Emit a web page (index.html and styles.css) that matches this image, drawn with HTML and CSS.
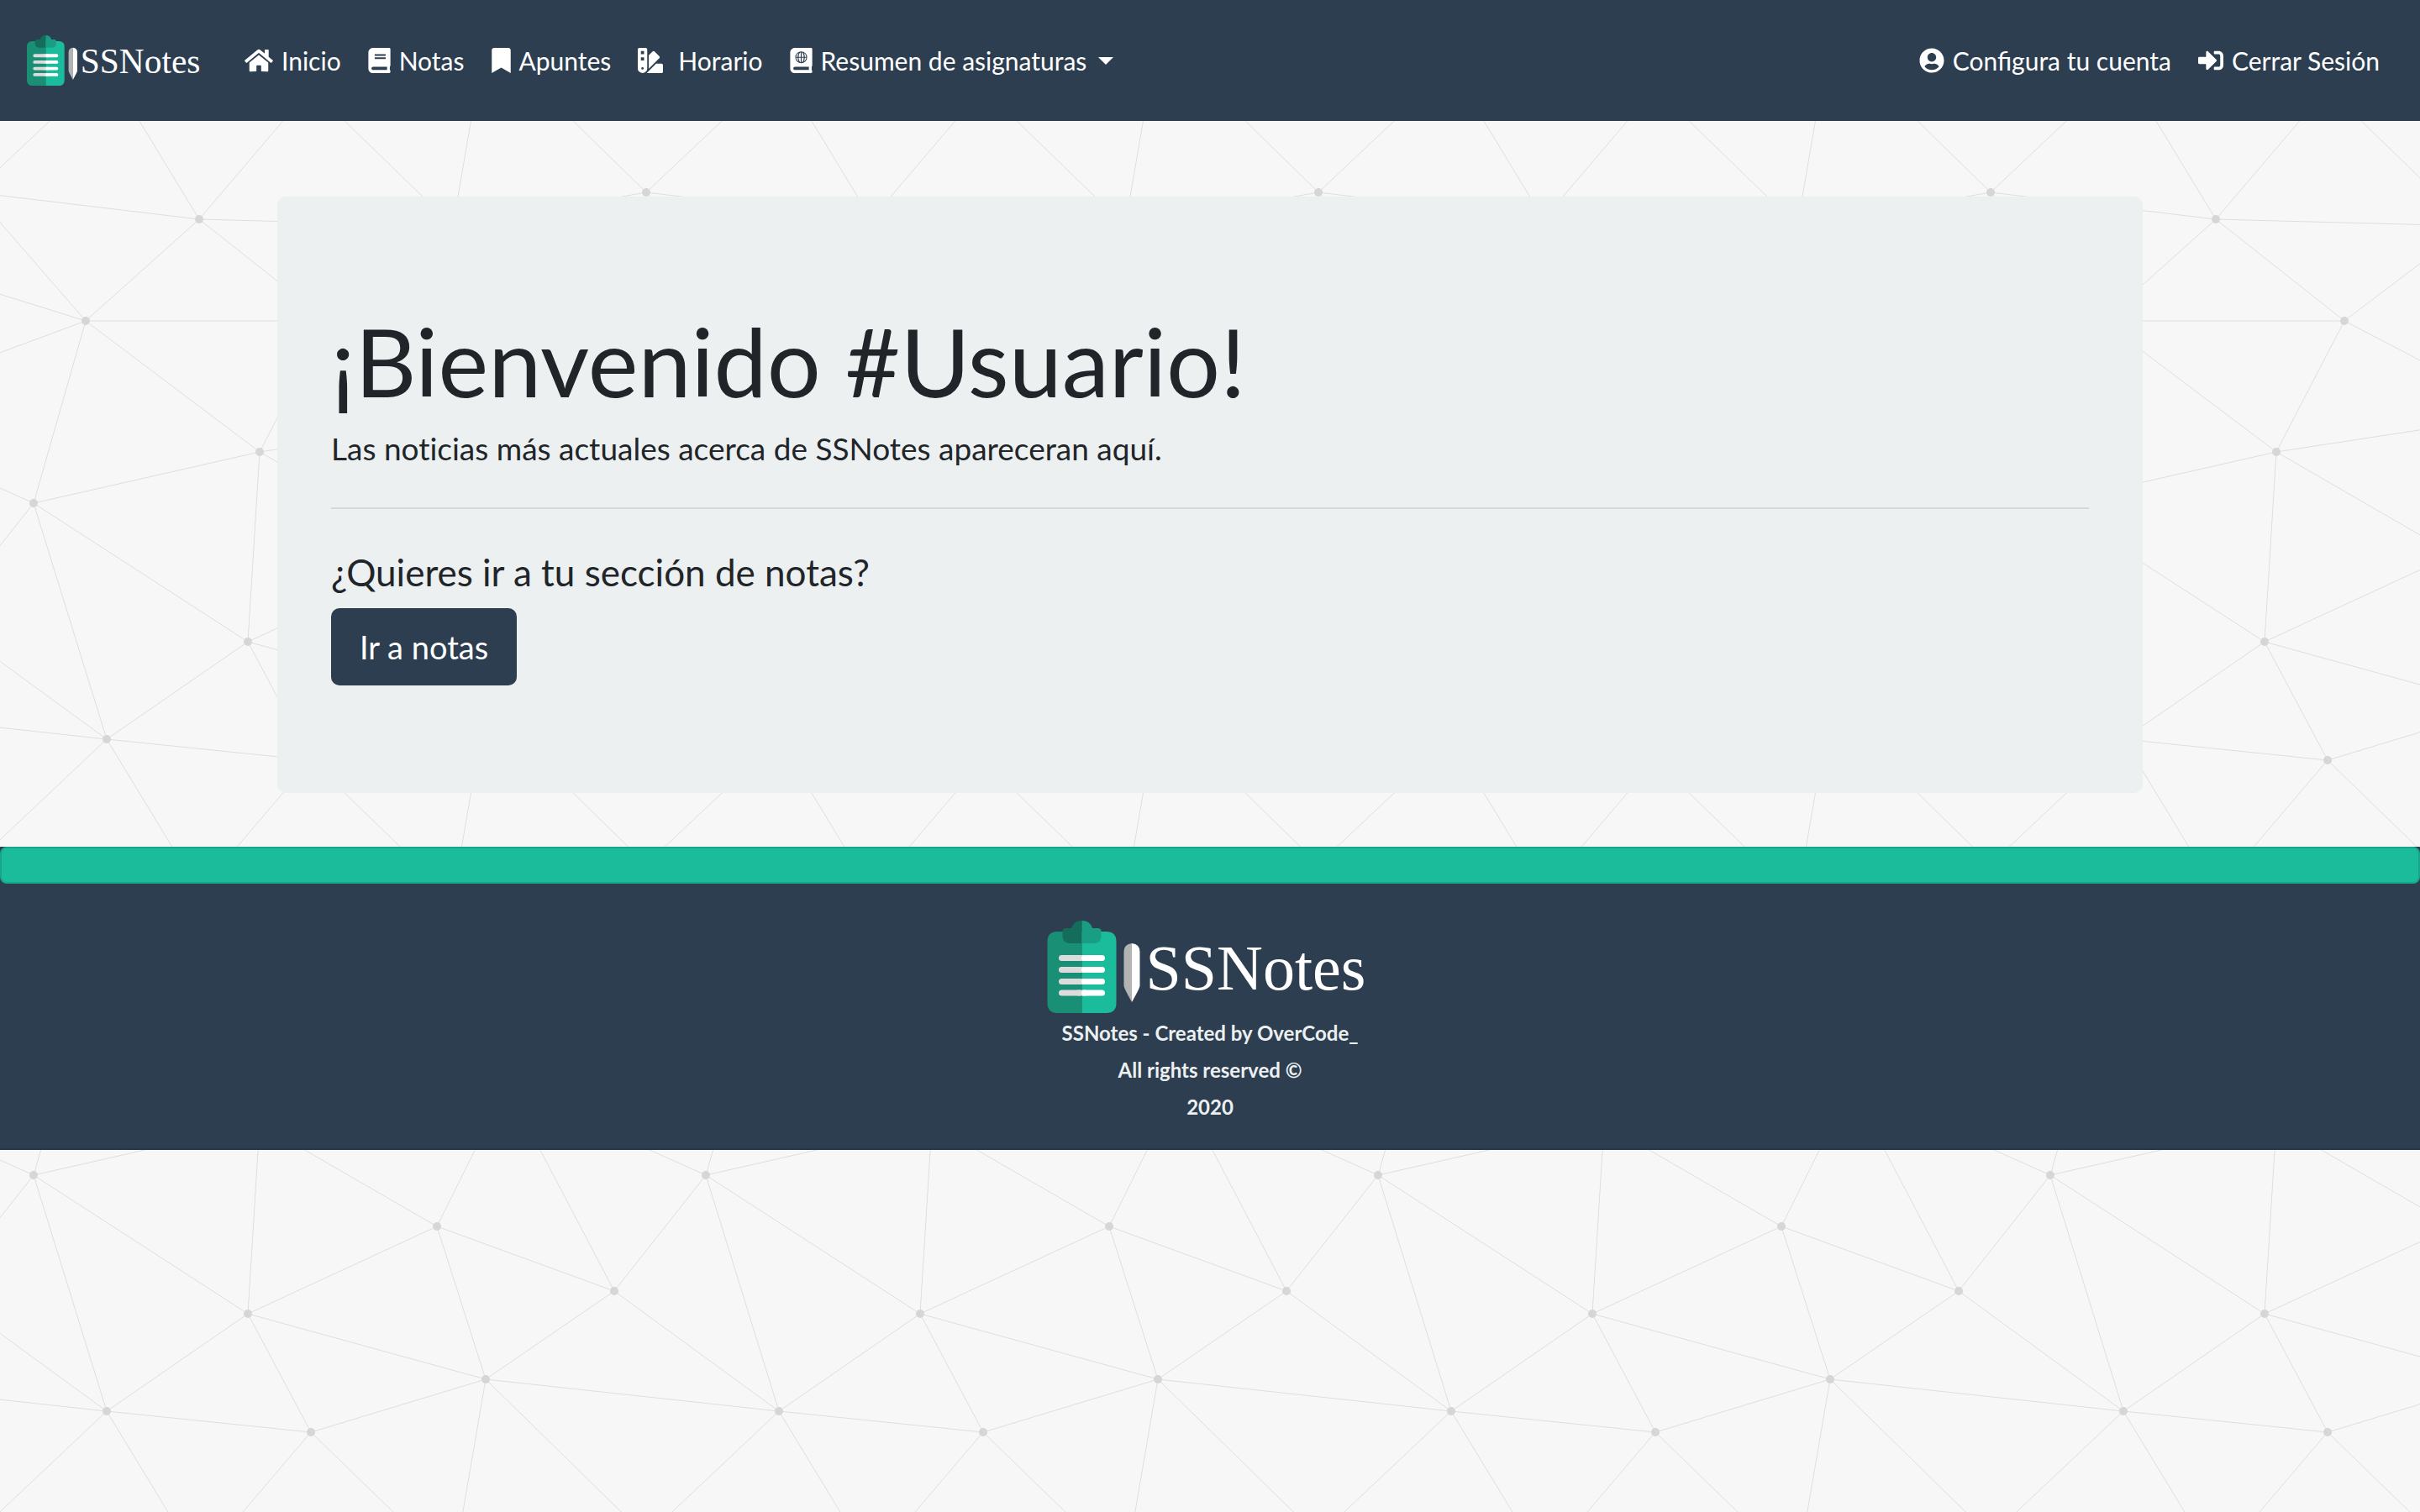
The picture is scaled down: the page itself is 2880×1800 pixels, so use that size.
FILE: index.html
```html
<!DOCTYPE html>
<html lang="es">
<head>
<meta charset="utf-8">
<title>SSNotes</title>
<meta name="viewport" content="width=device-width, initial-scale=1">
<link rel="stylesheet" href="styles.css">
</head>
<body>
<svg class="defs" aria-hidden="true">
  <symbol id="logo" viewBox="0 0 387 110">
    <path fill="#198f75" d="M41 13H12Q0 13 0 25V98Q0 110 12 110H41Z"/>
    <path fill="#1abc9c" d="M41 13H70Q82 13 82 25V98Q82 110 70 110H41Z"/>
    <path fill="#146c5b" d="M41 0Q31 0 28.500 9H22Q18 9 18 13V18Q18 27 27 27H41Z"/>
    <path fill="#1a9e83" d="M41 0Q51 0 53.500 9H60Q64 9 64 13V18Q64 27 55 27H41Z"/>
    <g stroke-width="7">
      <path stroke="#dcdcdc" stroke-linecap="round" d="M17 44.500H38M17 58.500H38M17 72.500H38M17 86H38"/>
      <path stroke="#fff" stroke-linecap="round" d="M44 44.500H65M44 58.500H65M44 72.500H65M44 86H65"/>
      <path stroke="#dcdcdc" d="M36 44.500H41M36 58.500H41M36 72.500H41M36 86H41"/>
      <path stroke="#fff" d="M41 44.500H46M41 58.500H46M41 72.500H46M41 86H46"/>
    </g>
    <path fill="#b3b3b3" d="M100.500 27Q91 28 91 37V78Q92 82 100.500 97Z"/>
    <path fill="#fff" d="M100.500 27Q110 28 110 37V78Q109 82 100.500 97Z"/>
    <text class="logo-word" x="117" y="82">SSNotes</text>
  </symbol>
</svg>

<nav class="navbar">
  <a class="brand" href="#" aria-label="SSNotes"><svg class="brand-logo"><use href="#logo"/></svg></a>
  <ul class="nav">
    <li><a class="nav-link" href="#">
      <svg class="icon icon-wide" viewBox="0 0 576 512"><path d="M280.370 148.260L96 300.110V464a16 16 0 0 0 16 16l112.060-.29a16 16 0 0 0 15.920-16V368a16 16 0 0 1 16-16h64a16 16 0 0 1 16 16v95.640a16 16 0 0 0 16 16.050L464 480a16 16 0 0 0 16-16V300L295.670 148.260a12.190 12.190 0 0 0-15.300 0zM571.600 251.470L488 182.560V44.050a12 12 0 0 0-12-12h-56a12 12 0 0 0-12 12v72.610L318.470 43a48 48 0 0 0-61 0L4.340 251.470a12 12 0 0 0-1.600 16.900l25.500 31A12 12 0 0 0 45.150 301l235.220-193.740a12.190 12.190 0 0 1 15.300 0L530.900 301a12 12 0 0 0 16.900-1.600l25.500-31a12 12 0 0 0-1.700-16.930z"/></svg>
      Inicio</a></li>
    <li><a class="nav-link" href="#">
      <svg class="icon icon-book" viewBox="0 0 448 512"><path d="M448 360V24c0-13.300-10.700-24-24-24H96C43 0 0 43 0 96v320c0 53 43 96 96 96h328c13.300 0 24-10.700 24-24v-16c0-7.500-3.500-14.300-8.900-18.700-4.200-15.400-4.200-59.300 0-74.700 5.400-4.300 8.900-11.100 8.900-18.600zM128 134c0-3.300 2.700-6 6-6h212c3.300 0 6 2.700 6 6v20c0 3.300-2.700 6-6 6H134c-3.300 0-6-2.700-6-6v-20zm0 64c0-3.300 2.700-6 6-6h212c3.300 0 6 2.700 6 6v20c0 3.300-2.700 6-6 6H134c-3.300 0-6-2.700-6-6v-20zm253.400 250H96c-17.700 0-32-14.300-32-32 0-17.600 14.400-32 32-32h285.400c-1.900 17.100-1.900 46.900 0 64z"/></svg>
      Notas</a></li>
    <li><a class="nav-link" href="#">
      <svg class="icon icon-mark" viewBox="0 0 384 512"><path d="M0 512V48C0 21.490 21.490 0 48 0h288c26.510 0 48 21.490 48 48v464L192 400 0 512z"/></svg>
      Apuntes</a></li>
    <li><a class="nav-link nav-link-spaced" href="#">
      <svg class="icon" viewBox="0 0 512 512"><path fill-rule="evenodd" d="M160 0H32A32 32 0 0 0 0 32v384a96 96 0 0 0 192 0V32a32 32 0 0 0-32-32zM96 440a24 24 0 1 1 24-24 24 24 0 0 1-24 24zm32-184H64v-64h64zm0-128H64V64h64zm352 192H372.500l-186.600 186.500c-2 2-4.300 3.500-6.400 5.500H480a32 32 0 0 0 32-32V352a32 32 0 0 0-32-32zM434 167.600l-90.500-90.500a32 32 0 0 0-45.300 0L224 151.300v271.200l210-209.700a32 32 0 0 0 0-45.200z"/></svg>
      Horario</a></li>
    <li><button class="nav-link dropdown" type="button" aria-haspopup="true">
      <svg class="icon icon-book" viewBox="0 0 448 512"><path fill-rule="evenodd" d="M448 360V24c0-13.300-10.700-24-24-24H96C43 0 0 43 0 96v320c0 53 43 96 96 96h328c13.300 0 24-10.700 24-24v-16c0-7.500-3.500-14.300-8.900-18.700-4.200-15.400-4.200-59.300 0-74.700 5.400-4.300 8.900-11.100 8.900-18.600zM224 72a120 120 0 1 1 0 240 120 120 0 1 1 0-240zm157.400 376H96c-17.700 0-32-14.300-32-32s14.300-32 32-32h285.400c-1.900 17.100-1.900 46.900 0 64z"/><path d="M214 90v92h-42c1-48 18-84 42-92zm20 0c24 8 41 44 42 92h-42zm-60 13c-14 19-22 47-23 79h-29c3-35 22-65 52-79zm100 0c30 14 49 44 52 79h-29c-1-32-9-60-23-79zM122 202h29c1 32 9 60 23 79-30-14-49-44-52-79zm50 0h42v92c-24-8-41-44-42-92zm62 0h42c-1 48-18 84-42 92zm63 0h29c-3 35-22 65-52 79 14-19 22-47 23-79z"/></svg>
      Resumen de asignaturas<span class="caret"></span></button></li>
  </ul>
  <ul class="nav nav-end">
    <li><a class="nav-link" href="#">
      <svg class="icon" viewBox="0 0 496 512"><path d="M248 8C111 8 0 119 0 256s111 248 248 248 248-111 248-248S385 8 248 8zm0 96c48.600 0 88 39.400 88 88s-39.400 88-88 88-88-39.400-88-88 39.400-88 88-88zm0 344c-58.700 0-111.300-26.600-146.500-68.200 18.800-35.400 55.600-59.800 98.500-59.800 2.400 0 4.800.4 7.100 1.100 13 4.200 26.600 6.900 40.900 6.900 14.300 0 28-2.700 40.900-6.900 2.300-.7 4.700-1.100 7.100-1.100 42.900 0 79.700 24.400 98.500 59.800C359.300 421.400 306.700 448 248 448z"/></svg>
      Configura tu cuenta</a></li>
    <li><a class="nav-link" href="#">
      <svg class="icon" viewBox="0 0 512 512"><path d="M416 448h-84c-6.600 0-12-5.400-12-12v-40c0-6.600 5.400-12 12-12h84c17.700 0 32-14.300 32-32V160c0-17.700-14.300-32-32-32h-84c-6.600 0-12-5.400-12-12V76c0-6.600 5.400-12 12-12h84c53 0 96 43 96 96v192c0 53-43 96-96 96zm-47-209L201 71c-15-15-41-4.500-41 17v96H24c-13.300 0-24 10.700-24 24v96c0 13.300 10.700 24 24 24h136v96c0 21.500 26 32 41 17l168-168c9.300-9.400 9.300-24.600 0-34z"/></svg>
      Cerrar Sesión</a></li>
  </ul>
</nav>

<main class="container">
  <section class="jumbotron">
    <h1>¡Bienvenido #Usuario!</h1>
    <p class="lead">Las noticias más actuales acerca de SSNotes apareceran aquí.</p>
    <hr>
    <h2>¿Quieres ir a tu sección de notas?</h2>
    <a class="btn" href="#">Ir a notas</a>
  </section>
</main>

<footer class="footer">
  <div class="footer-bar"></div>
  <div class="footer-body">
    <svg class="footer-logo" role="img" aria-label="SSNotes"><use href="#logo"/></svg>
    <p>SSNotes - Created by OverCode_</p>
    <p>All rights reserved ©</p>
    <p>2020</p>
  </div>
</footer>
</body>
</html>
```

FILE: styles.css
```css
*,
*::before,
*::after {
  box-sizing: border-box;
}

body {
  margin: 0;
  font: 400 30px/45px Lato, "Liberation Sans", sans-serif;
  color: #212529;
  background-color: #f7f7f7;
  background-image: url("data:image/svg+xml,%3Csvg xmlns='http://www.w3.org/2000/svg' width='800' height='800'%3E%3Cdefs%3E%3Cg id='n'%3E%3Cpath fill='none' stroke='%23dedede' d='M40 599L-69 737M40 599L-197 493M40 599L102 382M40 599L309 538M40 599L295 764M40 599L127 880M309 538L295 764M309 538L520 660M309 538L603 493M309 538L102 382M309 538L390 382M520 660L603 493M520 660L731 737M520 660L295 764M520 660L578 842M731 737L603 493M731 737L578 842M731 737L927 880M295 764L578 842M295 764L127 880M295 764L370 905M578 42L927 80M578 42L370 105M578 42L539 269M578 42L769 229M127 80L370 105M127 80L-31 229M127 80L237 261M370 105L237 261M370 105L539 269M237 261L-31 229M237 261L539 269M237 261L390 382M237 261L102 382M102 382L390 382M102 382L-31 229M102 382L-261 269M102 382L-197 493M390 382L539 269M390 382L603 493M539 269L769 229M539 269L603 493'/%3E%3Cg fill='%23d6d6d6'%3E%3Ccircle cx='40' cy='599' r='5'/%3E%3Ccircle cx='520' cy='660' r='5'/%3E%3Ccircle cx='731' cy='737' r='5'/%3E%3Ccircle cx='295' cy='764' r='5'/%3E%3Ccircle cx='127' cy='80' r='5'/%3E%3Ccircle cx='370' cy='105' r='5'/%3E%3Ccircle cx='578' cy='42' r='5'/%3E%3Ccircle cx='237' cy='261' r='5'/%3E%3Ccircle cx='102' cy='382' r='5'/%3E%3Ccircle cx='309' cy='538' r='5'/%3E%3Ccircle cx='390' cy='382' r='5'/%3E%3Ccircle cx='769' cy='229' r='5'/%3E%3Ccircle cx='539' cy='269' r='5'/%3E%3Ccircle cx='603' cy='493' r='5'/%3E%3C/g%3E%3C/g%3E%3C/defs%3E%3Cuse href='%23n' x='800'/%3E%3Cuse href='%23n' x='-800'/%3E%3Cuse href='%23n' y='-800'/%3E%3Cuse href='%23n' x='-800' y='-800'/%3E%3Cuse href='%23n' x='800' y='-800'/%3E%3Cuse href='%23n'/%3E%3C/svg%3E");
}

h1,
h2,
p,
ul {
  margin: 0;
  padding: 0;
}

a {
  color: inherit;
  text-decoration: none;
}

.defs {
  display: none;
}

.logo-word {
  font: 76px "Liberation Serif", serif;
  fill: #fff;
}

/* Navigation */

.navbar {
  display: flex;
  align-items: center;
  min-height: 144px;
  padding: 0 32px;
  color: #fff;
  background: #2c3e50;
}

.brand {
  display: flex;
  margin-right: 32px;
}

.brand-logo {
  width: 211px;
  height: 60px;
}

.nav {
  display: flex;
  list-style: none;
}

.nav-end {
  margin-left: auto;
}

.nav-link {
  display: flex;
  align-items: center;
  gap: 10px;
  padding: 16px;
  border: 0;
  font: inherit;
  color: inherit;
  background: none;
  white-space: nowrap;
}

.nav-link-spaced {
  gap: 18px;
}

.icon {
  flex: none;
  width: 30px;
  height: 30px;
  fill: currentColor;
}

.icon-wide {
  width: 34px;
}

.icon-book {
  width: 27px;
}

.icon-mark {
  width: 23px;
}

.caret {
  margin-left: 4px;
  border: 9px solid transparent;
  border-top-color: currentColor;
  border-bottom: 0;
}

/* Welcome panel */

.container {
  max-width: 2280px;
  margin: 0 auto;
  padding: 90px 30px 64px;
}

.jumbotron {
  padding: 128px 64px;
  border-radius: 10px;
  background: #ecf0f1;
}

h1 {
  margin-bottom: 16px;
  font-size: 113px;
  font-weight: 400;
  line-height: 134px;
}

.lead {
  font-size: 37px;
  line-height: 44px;
  font-variant-ligatures: none;
}

hr {
  height: 2px;
  margin: 48px 0;
  border: 0;
  background: #d4d8d9;
}

h2 {
  margin-bottom: 16px;
  font-size: 44px;
  font-weight: 400;
  line-height: 54px;
}

.btn {
  display: inline-block;
  padding: 18px 34px;
  border-radius: 10px;
  font-size: 38px;
  line-height: 56px;
  color: #fff;
  background: #2c3e50;
  vertical-align: top;
}

/* Footer */

.footer {
  color: #ecf0f1;
  background: #2c3e50;
  border-bottom: 2px solid #27374a;
}

.footer-bar {
  height: 44px;
  border: 2px solid #18a689;
  border-radius: 8px;
  background: #1abc9c;
}

.footer-body {
  display: flex;
  flex-direction: column;
  align-items: center;
  padding: 44px 40px 27px;
  font-size: 24px;
  font-weight: 700;
  line-height: 44px;
  text-align: center;
}

.footer-logo {
  width: 388px;
  height: 110px;
  margin-bottom: 2px;
}
```
